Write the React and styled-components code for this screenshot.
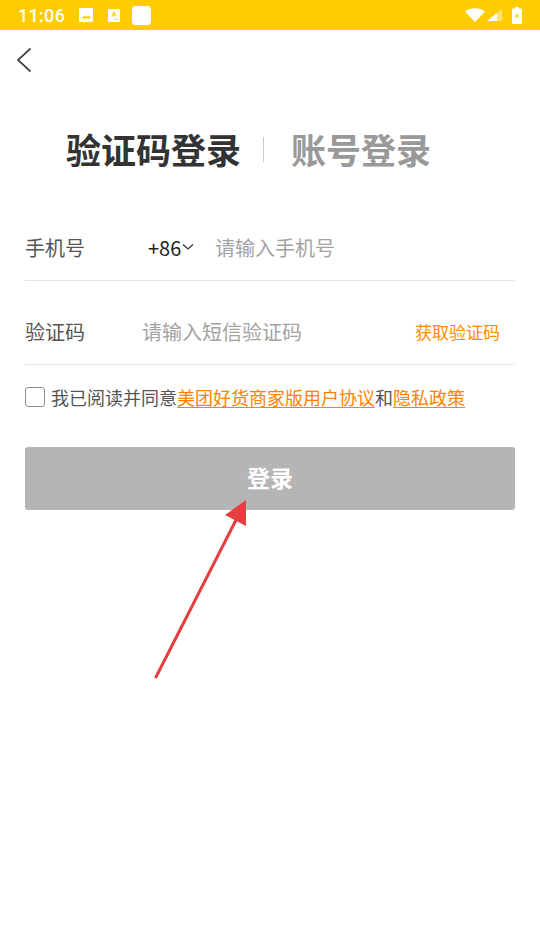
import React from 'react'
import styled, { createGlobalStyle } from 'styled-components'

const GlobalStyle = createGlobalStyle`
  html, body {
    margin: 0;
    padding: 0;
    background: #fff;
  }
  * {
    box-sizing: border-box;
  }
`

const Page = styled.div`
  position: relative;
  width: 540px;
  height: 930px;
  overflow: hidden;
  background: #fff;
  font-family: 'Noto Sans CJK SC', 'Noto Sans', sans-serif;
`

const StatusBar = styled.div`
  display: flex;
  align-items: center;
  justify-content: space-between;
  height: 30px;
  padding: 0 18px;
  background: #ffcc00;
  color: #fff;
`

const StatusGroup = styled.div`
  display: flex;
  align-items: center;
`

const Clock = styled.span`
  width: 60px;
  font-family: Roboto, sans-serif;
  font-size: 18px;
  font-weight: 500;
  letter-spacing: 0.3px;
`

const StatusIcon = styled.svg`
  display: block;
  margin-right: ${(props) => props.$gap || 0}px;
`

const BlankApp = styled.div`
  width: 19px;
  height: 19px;
  border-radius: 4px;
  background: #fff;
`

const NavBar = styled.div`
  display: flex;
  align-items: center;
  height: 60px;
  padding-left: 16px;
`

const Tabs = styled.div`
  display: flex;
  align-items: center;
  height: 44px;
  margin-top: 37px;
  padding-left: 66px;
`

const Tab = styled.span`
  font-size: 35px;
  line-height: 44px;
  font-weight: 700;
  color: ${(props) => (props.$active ? '#333' : '#999')};
`

const TabDivider = styled.span`
  width: 1px;
  height: 25px;
  margin: 0 27px 0 22px;
  background: #ccc;
`

const Form = styled.div`
  margin-top: 26px;
  padding: 0 25px;
`

const Row = styled.div`
  display: flex;
  align-items: center;
  height: 84px;
  padding-top: 17px;
  border-bottom: 1px solid #e5e5e5;
  font-size: 20px;
`

const Label = styled.span`
  width: ${(props) => props.$width}px;
  flex: none;
  color: #555;
`

const Code = styled.span`
  display: flex;
  align-items: center;
  width: 67px;
  flex: none;
  color: #222;
`

const Placeholder = styled.span`
  flex: 1;
  color: #a3a3a3;
`

const GetCode = styled.span`
  margin-right: 15px;
  font-size: 17px;
  color: #ff8c00;
`

const Agreement = styled.div`
  display: flex;
  align-items: center;
  height: 24px;
  margin-top: 20px;
  font-size: 18px;
  color: #555;
`

const CheckBox = styled.span`
  width: 20px;
  height: 20px;
  margin-right: 6px;
  flex: none;
  border: 1px solid #8f8f8f;
  border-radius: 3px;
  background: #fff;
`

const DocLink = styled.span`
  color: #ff8200;
  text-decoration: underline;
  text-underline-offset: 2px;
`

const LoginButton = styled.button`
  display: block;
  width: 100%;
  height: 63px;
  margin-top: 38px;
  padding: 0 0 4px;
  border: none;
  border-radius: 3px;
  background: #b5b5b5;
  color: #fff;
  font-family: inherit;
  font-size: 23px;
  font-weight: 700;
`

const Arrow = styled.svg`
  position: absolute;
  top: 0;
  left: 0;
  pointer-events: none;
`

function Status() {
  return (
    <StatusBar>
      <StatusGroup>
        <Clock>11:06</Clock>
        <StatusIcon $gap={14} width="16" height="16" viewBox="0 0 16 16">
          <path
            fillRule="evenodd"
            fill="#fff"
            d="M2 1h12a1 1 0 0 1 1 1v12a1 1 0 0 1-1 1H2a1 1 0 0 1-1-1V2a1 1 0 0 1 1-1zm1 10.500h10L10 8l-2 2-1.500-1.200z"
          />
        </StatusIcon>
        <StatusIcon $gap={12} width="12" height="13" viewBox="0 0 14 15">
          <path
            fillRule="evenodd"
            fill="#fff"
            d="M1 0h12a1 1 0 0 1 1 1v13a1 1 0 0 1-1 1H1a1 1 0 0 1-1-1V1a1 1 0 0 1 1-1zm3 9h1.400l.5-1.400h2.200L8.600 9H10L7.700 3H6.300zm2.300-2.600L7 4.600l.7 1.800zM7 11v1.500h1V11zm2 0v1.500h1V11zm2 0v1.500h1V11z"
          />
        </StatusIcon>
        <BlankApp />
      </StatusGroup>
      <StatusGroup>
        <StatusIcon $gap={2} width="20" height="14" viewBox="0 0 20 14">
          <path fill="#fff" d="M0 3.500C5-1 15-1 20 3.500L10 14z" />
        </StatusIcon>
        <StatusIcon $gap={10} width="15" height="12" viewBox="0 0 15 12">
          <path fill="#fff" d="M0 12 10 4v8z" />
          <path fill="#fff" opacity="0.45" d="M10 4 15 0v12h-5z" />
        </StatusIcon>
        <StatusIcon width="10" height="17" viewBox="0 0 10 17">
          <path
            fillRule="evenodd"
            fill="#fff"
            d="M3 0h4v1.500h2a1 1 0 0 1 1 1V16a1 1 0 0 1-1 1H1a1 1 0 0 1-1-1V2.500a1 1 0 0 1 1-1h2zM6 4.500 3 10h2l-1 3.500L7 8H5z"
          />
        </StatusIcon>
      </StatusGroup>
    </StatusBar>
  )
}

function App() {
  return (
    <Page>
      <GlobalStyle />
      <Status />
      <NavBar>
        <svg width="16" height="26" viewBox="0 0 16 26" fill="none">
          <path d="M14.500 1.500 2 13l12.500 11.500" stroke="#444" strokeWidth="1.700" />
        </svg>
      </NavBar>
      <Tabs>
        <Tab $active>验证码登录</Tab>
        <TabDivider />
        <Tab>账号登录</Tab>
      </Tabs>
      <Form>
        <Row>
          <Label $width={123}>手机号</Label>
          <Code>
            +86
            <svg width="14" height="8" viewBox="0 0 14 8" fill="none">
              <path d="M2 1.500 7 6l5-4.500" stroke="#333" strokeWidth="1.300" />
            </svg>
          </Code>
          <Placeholder>请输入手机号</Placeholder>
        </Row>
        <Row>
          <Label $width={117}>验证码</Label>
          <Placeholder>请输入短信验证码</Placeholder>
          <GetCode>获取验证码</GetCode>
        </Row>
        <Agreement>
          <CheckBox />
          我已阅读并同意<DocLink>美团好货商家版用户协议</DocLink>和<DocLink>隐私政策</DocLink>
        </Agreement>
        <LoginButton>登录</LoginButton>
      </Form>
      <Arrow width="540" height="930" viewBox="0 0 540 930" fill="none">
        <path d="M155.500 678 236 520" stroke="#e53e3e" strokeWidth="3" />
        <path d="M246 500 225 515 246 526z" fill="#e53e3e" />
      </Arrow>
    </Page>
  )
}

export default App
